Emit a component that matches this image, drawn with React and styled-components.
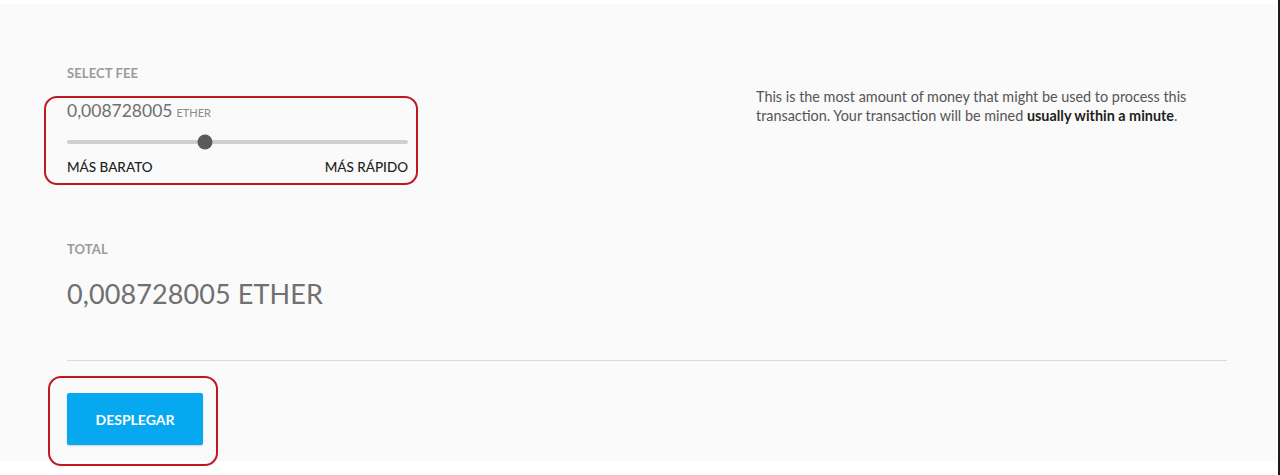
import React from "react";
import styled, { createGlobalStyle } from "styled-components";

const Global = createGlobalStyle`
  html, body { margin: 0; padding: 0; background: #ffffff; }
  body { font-family: Lato, "Noto Sans", "Liberation Sans", sans-serif; }
  * { box-sizing: border-box; }
`;

const Frame = styled.div`
  width: 1280px;
  height: 475px;
  background: #ffffff;
  display: flex;
  padding-top: 4px;
  position: relative;
  overflow: hidden;
`;

const Panel = styled.div`
  width: 1276px;
  height: 457px;
  background: #fafafa;
  padding: 0 49px 0 67px;
  display: flex;
  flex-direction: column;
`;

const EdgeLine = styled.div`
  width: 2px;
  height: 475px;
  margin-top: -4px;
  margin-left: 2px;
  background: #1a1a1a;
`;

const FeeGrid = styled.div`
  display: grid;
  grid-template-columns: 341px 1fr;
  column-gap: 348px;
  padding-top: 61px;
`;

const Label = styled.div`
  font-size: 13px;
  font-weight: 700;
  color: #9a9a9a;
  letter-spacing: 0.1px;
  line-height: 16px;
  text-transform: uppercase;
`;

const FeeAmount = styled.div`
  margin-top: 19px;
  font-size: 17.5px;
  color: #6f6f6f;
  line-height: 22px;
  display: flex;
  align-items: baseline;
  gap: 4px;
`;

const Unit = styled.span`
  font-size: 11px;
  color: #8a8a8a;
  text-transform: uppercase;
`;

const Track = styled.div`
  position: relative;
  margin-top: 16px;
  height: 4px;
  border-radius: 2px;
  background: #cfcfcf;
`;

const Thumb = styled.div`
  position: absolute;
  top: 50%;
  width: 15px;
  height: 15px;
  border-radius: 50%;
  background: #5a5a5a;
  transform: translate(-50%, -50%);
`;

const Ends = styled.div`
  margin-top: 14px;
  display: flex;
  justify-content: space-between;
  font-size: 13.5px;
  font-weight: 500;
  color: #222;
  line-height: 18px;
`;

const Note = styled.p`
  margin: 22px 0 0;
  font-size: 14.4px;
  line-height: 19px;
  color: #555;
  max-width: 460px;
  strong { color: #1e1e1e; font-weight: 700; }
`;

const TotalBlock = styled.div`
  margin-top: 65px;
`;

const TotalValue = styled.div`
  margin-top: 21px;
  font-size: 27px;
  font-weight: 400;
  color: #707070;
  line-height: 32px;
  letter-spacing: 0.1px;
`;

const Rule = styled.hr`
  margin: 50px 0 0;
  border: 0;
  border-top: 1px solid #d9d9d9;
`;

const Button = styled.button`
  margin-top: 32px;
  align-self: flex-start;
  width: 136px;
  height: 52px;
  border: 0;
  border-radius: 2px;
  background: #06a9f0;
  color: #fff;
  font-family: inherit;
  font-size: 14px;
  font-weight: 700;
  text-transform: uppercase;
  box-shadow: 0 1px 2px rgba(0, 0, 0, 0.18);
`;

const Mark = styled.div`
  position: absolute;
  border: 2px solid #c01820;
  border-radius: 13px;
  pointer-events: none;
`;

export default function App() {
  const pct = (205 - 67) / 341;
  return (
    <>
      <Global />
      <Frame>
        <Panel>
          <FeeGrid>
            <div>
              <Label>Select fee</Label>
              <FeeAmount>
                0,008728005 <Unit>Ether</Unit>
              </FeeAmount>
              <Track>
                <Thumb style={{ left: `${pct * 100}%` }} />
              </Track>
              <Ends>
                <span>MÁS BARATO</span>
                <span>MÁS RÁPIDO</span>
              </Ends>
            </div>
            <Note>
              This is the most amount of money that might be used to process this
              transaction. Your transaction will be mined{" "}
              <strong>usually within a minute</strong>.
            </Note>
          </FeeGrid>
          <TotalBlock>
            <Label>Total</Label>
            <TotalValue>0,008728005 ETHER</TotalValue>
          </TotalBlock>
          <Rule />
          <Button>Desplegar</Button>
        </Panel>
        <EdgeLine />
        <Mark style={{ left: 44, top: 96, width: 374, height: 89 }} />
        <Mark style={{ left: 48, top: 376, width: 170, height: 90 }} />
      </Frame>
    </>
  );
}
